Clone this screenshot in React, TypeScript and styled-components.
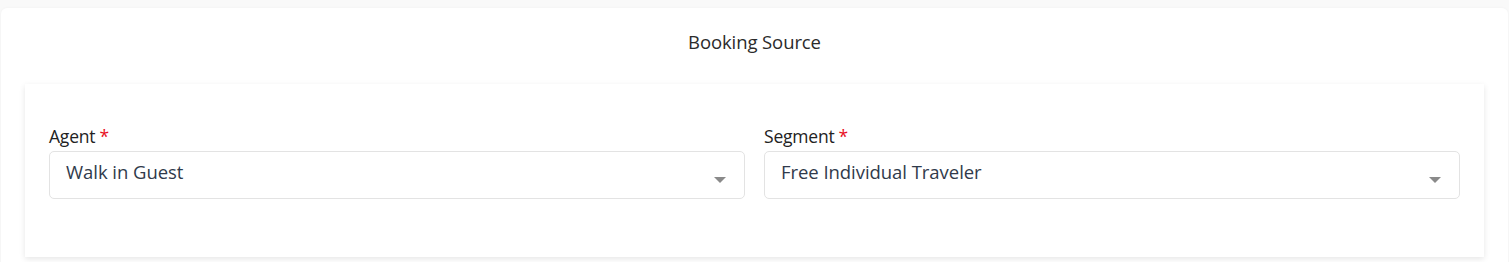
import * as React from 'react'
import styled, { createGlobalStyle } from 'styled-components'

const GlobalStyle = createGlobalStyle`
  html, body {
    margin: 0;
    padding: 0;
    background: #f9f9f9;
    font-family: 'Open Sans', 'Noto Sans', sans-serif;
    overflow: hidden;
  }
`

const Page = styled.div`
  padding: 8px 1px 0 1px;
`

const Card = styled.div`
  background: #fff;
  border-radius: 6px 6px 0 0;
  box-shadow: 0 0 3px rgba(0, 0, 0, 0.04);
  padding: 23px 24px 6px 24px;
`

const Title = styled.h2`
  margin: 0 0 31px 0;
  text-align: center;
  font-size: 18.5px;
  font-weight: 400;
  line-height: 22px;
  color: #2b2b2b;
  letter-spacing: -0.1px;
`

const Panel = styled.div`
  background: #fff;
  box-shadow: 0 2px 6px rgba(0, 0, 0, 0.1);
  padding: 40px 24px 58px 24px;
  display: grid;
  grid-template-columns: 1fr 1fr;
  column-gap: 19px;
`

const Field = styled.div`
  display: flex;
  flex-direction: column;
`

const Label = styled.label`
  font-size: 17.5px;
  line-height: 24px;
  color: #222;
  margin-bottom: 3px;
  letter-spacing: -0.2px;
`

const Required = styled.span`
  color: #e8101f;
  margin-left: 4px;
`

const SelectBox = styled.div`
  position: relative;
  height: 48px;
  box-sizing: border-box;
  border: 1px solid #e3e3e3;
  border-radius: 5px;
  display: flex;
  align-items: center;
  padding: 0 40px 7px 16px;
  font-size: 18.5px;
  color: #303a4b;
  cursor: pointer;
  letter-spacing: -0.05px;
`

const Caret = styled.span`
  position: absolute;
  right: 18px;
  top: 25px;
  width: 0;
  height: 0;
  border-left: 6px solid transparent;
  border-right: 6px solid transparent;
  border-top: 6px solid #8a8a8a;
`

const Select: React.FC<{ label: string; value: string }> = ({ label, value }) => (
  <Field>
    <Label>
      {label}
      <Required>*</Required>
    </Label>
    <SelectBox>
      {value}
      <Caret />
    </SelectBox>
  </Field>
)

const App: React.FC = () => {
  return (
    <>
      <GlobalStyle />
      <Page>
        <Card>
          <Title>Booking Source</Title>
          <Panel>
            <Select label="Agent" value="Walk in Guest" />
            <Select label="Segment" value="Free Individual Traveler" />
          </Panel>
        </Card>
      </Page>
    </>
  )
}

export default App
